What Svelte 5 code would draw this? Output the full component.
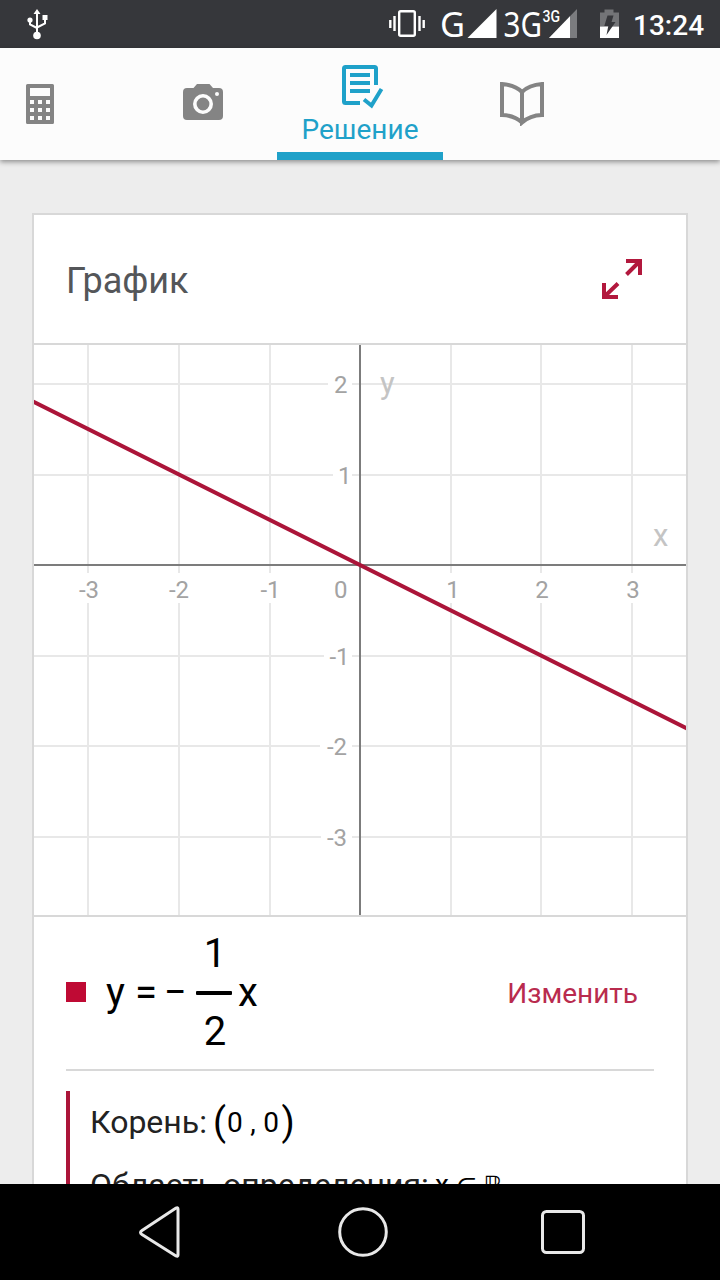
<script>
  const unit = 90.7;
  const origin = { x: 326, y: 220 };

  const columns = [
    { label: "-3", x: 54, text: 55 },
    { label: "-2", x: 145, text: 145 },
    { label: "-1", x: 236, text: 236.5 },
    { label: "1", x: 417, text: 419 },
    { label: "2", x: 507, text: 508 },
    { label: "3", x: 598, text: 599 }
  ];

  const rows = [
    { label: "2", y: 39, gap: 24, text: 313.5 },
    { label: "1", y: 130, gap: 19, text: 317.5 },
    { label: "-1", y: 311, gap: 28, text: 315.5 },
    { label: "-2", y: 401, gap: 32, text: 313 },
    { label: "-3", y: 492, gap: 31, text: 313 }
  ];

  const f = x => -x / 2;
  const toY = px => origin.y - f((px - origin.x) / unit) * unit;
</script>

<div class="screen">
  <header class="status">
    <svg class="usb" width="22" height="32" viewBox="0 0 22 32">
      <g fill="none" stroke="#fff" stroke-width="2">
        <path d="M11 4v24M4 12v4.500l7 3.500M19 10v5.500l-8 4" />
      </g>
      <g fill="#fff">
        <path d="M11 1l3.500 5h-7zM16.500 7h5v5h-5z" />
        <circle cx="4" cy="12" r="2.600" />
        <circle cx="11" cy="27.500" r="3.800" />
      </g>
    </svg>

    <svg class="signals" width="235" height="48" viewBox="385 0 235 48">
      <g fill="none" stroke="#fff">
        <rect x="399.200" y="11.200" width="15.600" height="24.600" rx="1.500" stroke-width="2.400" />
        <path d="M394.500 16v15M419.500 16v15M390.300 20v8M423.700 20v8" stroke-width="2.400" />
      </g>
      <g class="net" fill="#fff">
        <text x="440" y="37" font-size="35" textLength="25" lengthAdjust="spacingAndGlyphs">G</text>
        <text x="503.500" y="37" font-size="35" textLength="38.500" lengthAdjust="spacingAndGlyphs">3G</text>
        <text class="small" x="542.500" y="22" font-size="16" textLength="17.500" lengthAdjust="spacingAndGlyphs">3G</text>
      </g>
      <path d="M496.500 9v29h-29z" fill="#fff" />
      <path d="M577 9v29h-28z" fill="#7b7c7f" />
      <path d="M570 16.300v21.700h-21z" fill="#fff" />
      <path d="M604.500 9.500h9v3h5.500v14h-19v-14h4.500z" fill="#737477" />
      <path d="M600 26.500h19v11.500h-19z" fill="#fff" />
      <path d="M607.500 15.500h6l-2 6.500h4l-9 13 1.800-9h-4z" fill="#36373b" />
    </svg>
    <span class="clock">13:24</span>
  </header>

  <nav class="tabs">
    <div class="tab calc">
      <svg width="28" height="40" viewBox="0 0 28 40">
        <path
          fill="#848484"
          fill-rule="evenodd"
          d="M1.500 0h25a1.500 1.500 0 0 1 1.500 1.500v37a1.500 1.500 0 0 1-1.500 1.500h-25a1.500 1.500 0 0 1-1.500-1.500v-37a1.500 1.500 0 0 1 1.500-1.500zM4 4v8h20v-8zM4 16v4h4v-4zM12 16v4h4v-4zM20 16v4h4v-4zM4 24v4h4v-4zM12 24v4h4v-4zM20 24v4h4v-4zM4 32v4h4v-4zM12 32v4h4v-4zM20 32v4h4v-4z"
        />
      </svg>
    </div>
    <div class="tab">
      <svg width="40" height="40" viewBox="0 0 40 40">
        <path fill="#848484" d="M14 0h12.500l3.500 4h6a4 4 0 0 1 4 4v24a4 4 0 0 1-4 4h-32a4 4 0 0 1-4-4v-24a4 4 0 0 1 4-4h6.500z" />
        <circle cx="20" cy="20" r="8.200" fill="none" stroke="#fcfcfc" stroke-width="3.600" />
        <circle cx="34" cy="10" r="2" fill="#fcfcfc" />
      </svg>
    </div>
    <div class="tab active">
      <svg width="42" height="44" viewBox="0 0 42 44">
        <g fill="none" stroke="#1fa1c9" stroke-width="4">
          <path d="M18 38h-14.500a1.500 1.500 0 0 1-1.500-1.500v-33a1.500 1.500 0 0 1 1.500-1.500h29a1.500 1.500 0 0 1 1.500 1.500v16.500" />
          <path d="M8 10h20M8 18h20M8 26h20" />
          <path d="M22 34.500l7.500 6L39.500 24" />
        </g>
      </svg>
      <span>Решение</span>
    </div>
    <div class="tab">
      <svg width="44" height="44" viewBox="0 0 44 44">
        <path
          fill="none"
          stroke="#848484"
          stroke-width="4"
          d="M22 40.500Q14 33.300 2 33V2Q15 3 22 10Q29 3 42 2V33Q30 33.300 22 40.500V10"
        />
      </svg>
    </div>
  </nav>

  <main>
    <section class="card">
      <div class="title">
        <h2>График</h2>
        <svg width="40" height="40" viewBox="0 0 40 40">
          <g fill="none" stroke="#b2183d" stroke-width="4">
            <path d="M24 2h14v14M38 2L24.500 15.500" />
            <path d="M2 24v14h14M2 38L16 24.500" />
          </g>
        </svg>
      </div>

      <svg class="plot" width="652" height="570" viewBox="0 0 652 570">
        {#each columns as col}
          <line class="grid" x1={col.x} x2={col.x} y1="0" y2="570" />
        {/each}
        {#each rows as row}
          <line class="grid" x1="0" x2="652" y1={row.y} y2={row.y} />
        {/each}
        {#each columns as col}
          <rect x={col.x - 14} y="228" width="28" height="30" fill="#fff" />
          <text class="tick" x={col.text} y="252.500" text-anchor="middle">{col.label}</text>
        {/each}
        {#each rows as row}
          <rect x={318 - row.gap} y={row.y - 14} width={row.gap} height="28" fill="#fff" />
          <text class="tick" x={row.text} y={row.y + 8.5} text-anchor="end">{row.label}</text>
        {/each}
        <text class="tick" x="313.500" y="253" text-anchor="end">0</text>
        <text class="axis-name" x="346" y="49">y</text>
        <text class="axis-name" x="619" y="201">x</text>
        <path class="axis" d="M0 220h652M326 0v570" />
        <line class="curve" x1="-4" y1={toY(-4)} x2="656" y2={toY(656)} />
      </svg>

      <div class="details">
        <div class="equation">
          <i class="swatch"></i>
          <div class="formula">
            <span class="y">y</span>
            <span class="op">=</span>
            <span class="op">−</span>
            <span class="fraction">
              <span>1</span>
              <i></i>
              <span>2</span>
            </span>
            <span>x</span>
          </div>
          <span class="edit">Изменить</span>
        </div>

        <div class="facts">
          <p>
            <span class="name">Корень:</span>
            <span class="paren">(</span><span class="math pair">0 , 0</span><span class="paren">)</span>
          </p>
          <p>
            <span class="name domain">Область определения:</span>
            <span class="math">x</span>
            <span class="math set in">∈</span>
            <span class="math set">ℝ</span>
          </p>
        </div>
      </div>
    </section>
  </main>

  <footer>
    <svg width="42" height="52" viewBox="0 0 42 52">
      <path d="M39 3v46q0 2-2 1L3 28.500q-3-2 0-4L37 2q2-1 2 1z" />
    </svg>
    <svg width="50" height="50" viewBox="0 0 50 50">
      <circle cx="25" cy="25" r="23.300" />
    </svg>
    <svg width="44" height="44" viewBox="0 0 44 44">
      <rect x="1.500" y="1.500" width="41" height="41" rx="4" />
    </svg>
  </footer>
</div>

<style>
  :global(body) {
    margin: 0;
  }

  .screen {
    display: flex;
    flex-direction: column;
    width: 720px;
    height: 1280px;
    overflow: hidden;
    background: #ededed;
    font-family: Roboto, sans-serif;
  }

  svg {
    display: block;
    flex: none;
  }

  .status {
    display: flex;
    align-items: center;
    flex: none;
    height: 48px;
    background: #36373b;
    color: #fff;
  }

  .usb {
    margin-left: 25.500px;
  }

  .signals {
    margin-left: auto;
  }

  .net {
    font-family: "Noto Sans", sans-serif;
  }

  .small {
    font-family: Roboto, sans-serif;
    font-weight: 500;
  }

  .clock {
    width: 87px;
    padding: 3px 0 0 13px;
    font-size: 28px;
    font-weight: 500;
    line-height: 48px;
  }

  .tabs {
    display: grid;
    grid-template-columns: 129px 148px 166px 158px;
    flex: none;
    height: 112px;
    background: #fcfcfc;
    box-shadow: 0 2px 5px rgba(0, 0, 0, 0.4);
    z-index: 1;
  }

  .tab {
    display: flex;
    justify-content: center;
    padding-top: 36px;
  }

  .tab:last-child {
    padding-top: 34px;
  }

  .calc {
    justify-content: flex-start;
    padding-left: 26px;
  }

  .active {
    flex-direction: column;
    justify-content: flex-start;
    align-items: center;
    box-sizing: border-box;
    padding-top: 17px;
    border-bottom: 8px solid #1fa1c9;
    color: #1fa1c9;
    font-size: 28px;
    line-height: 42px;
  }

  .active svg {
    margin-left: 5px;
  }

  main {
    flex: 1;
    min-height: 0;
    padding: 53px 32px 0;
    overflow: hidden;
  }

  .card {
    border: 2px solid #d8d8d8;
    background: #fff;
  }

  .title {
    display: flex;
    align-items: center;
    justify-content: space-between;
    height: 128px;
    padding: 0 44px 0 32px;
    border-bottom: 2px solid #d8d8d8;
  }

  h2 {
    margin: 4px 0 0;
    color: #545659;
    font-size: 36px;
    font-weight: 400;
  }

  .plot {
    border-bottom: 2px solid #d8d8d8;
  }

  .grid {
    stroke: #e8e8e8;
    stroke-width: 2;
  }

  .axis {
    stroke: #7c7c7c;
    stroke-width: 2;
  }

  .curve {
    stroke: #ab1539;
    stroke-width: 4;
  }

  .tick {
    fill: #a3a3a3;
    font-size: 24px;
  }

  .axis-name {
    fill: #c4c4c4;
    font-size: 31px;
  }

  .details {
    padding: 0 32px;
  }

  .equation {
    display: flex;
    align-items: center;
    height: 152px;
    padding-right: 16px;
    border-bottom: 2px solid #d8d8d8;
  }

  .swatch {
    width: 20px;
    height: 20px;
    margin: 0 20px 2px 0;
    background: #bf0a34;
  }

  .formula {
    display: flex;
    align-items: center;
    margin-bottom: 1px;
    color: #000;
    font-size: 40px;
    line-height: 46px;
  }

  .y {
    width: 29px;
  }

  .op {
    width: 29px;
  }

  .fraction {
    display: flex;
    flex-direction: column;
    align-items: center;
    width: 36px;
    margin: 0 6px 0 3px;
  }

  .fraction span {
    padding-left: 2px;
  }

  .fraction i {
    width: 36px;
    height: 4px;
    margin: 14px 0;
    border-radius: 1px;
    background: #000;
  }

  .edit {
    margin-left: auto;
    color: #b92b4e;
    font-size: 28px;
  }

  .facts {
    margin-top: 20px;
    padding-left: 20px;
    border-left: 4px solid #ab1539;
    color: #222;
  }

  .facts p {
    display: flex;
    align-items: center;
    height: 62px;
    margin: 0;
    font-size: 32px;
    white-space: pre;
  }

  .name {
    width: 123px;
  }

  .domain {
    width: 345px;
    padding-top: 1px;
  }

  .math {
    color: #000;
    font-size: 28px;
  }

  .pair {
    padding: 0 2px 0 1px;
    letter-spacing: 0.3px;
  }

  .set {
    margin-left: 7px;
    padding-top: 2px;
    font-family: "DejaVu Sans", sans-serif;
    font-size: 24px;
  }

  .in {
    padding-top: 6px;
  }

  .paren {
    color: #000;
    font-size: 38px;
  }

  footer {
    display: flex;
    align-items: center;
    flex: none;
    height: 96px;
    padding-left: 139px;
    background: #000;
  }

  footer svg {
    fill: none;
    stroke: #e8e8e8;
    stroke-width: 3;
  }

  footer svg:nth-child(2) {
    margin: 0 153px 0 157px;
  }
</style>
